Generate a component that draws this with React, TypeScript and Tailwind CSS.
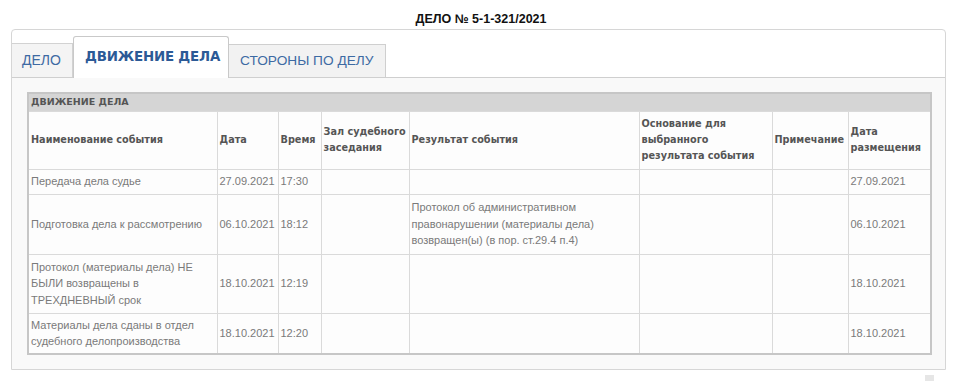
const cols = [189, 61, 43, 88, 230, 133, 76, 83]

const headers = [
  'Наименование события',
  'Дата',
  'Время',
  'Зал судебного заседания',
  'Результат события',
  'Основание для выбранного результата события',
  'Примечание',
  'Дата размещения',
]

const rows: { h: string; cells: string[] }[] = [
  { h: 'h-[25px]', cells: ['Передача дела судье', '27.09.2021', '17:30', '', '', '', '', '27.09.2021'] },
  {
    h: 'h-[60px]',
    cells: [
      'Подготовка дела к рассмотрению',
      '06.10.2021',
      '18:12',
      '',
      'Протокол об административном правонарушении (материалы дела) возвращен(ы) (в пор. ст.29.4 п.4)',
      '',
      '',
      '06.10.2021',
    ],
  },
  {
    h: 'h-[59px]',
    cells: ['Протокол (материалы дела) НЕ БЫЛИ возвращены в ТРЕХДНЕВНЫЙ срок', '18.10.2021', '12:19', '', '', '', '', '18.10.2021'],
  },
  {
    h: 'h-[41px]',
    cells: ['Материалы дела сданы в отдел судебного делопроизводства', '18.10.2021', '12:20', '', '', '', '', '18.10.2021'],
  },
]

export default function App() {
  return (
    <div className="w-[960px] h-[381px] bg-white font-['Liberation_Sans',Arial,sans-serif] overflow-hidden">
      <div className="pt-[12px] text-center text-[12.5px] leading-[14px] font-bold text-[#111] pl-[2px]">ДЕЛО № 5-1-321/2021</div>

      <div className="mt-[3px] ml-[11px] w-[935px] border border-[#d6d6d6] rounded-t-[4px] bg-white">
        {/* tabs */}
        <div className="pt-[6px] flex items-end border-b border-[#cfcfcf]">
          <div className="w-[61px] h-[34px] bg-[#f4f4f4] border-t border-r border-[#d2d2d2] flex items-center pl-[10px] text-[14px] text-[#3d6aa3]">
            ДЕЛО
          </div>
          <div className="w-[156px] h-[42px] -mb-px bg-white border border-b-0 border-[#c9c9c9] rounded-t-[3px] flex items-center pl-[11px] text-[13.4px] font-bold text-[#2c5a96] font-['DejaVu_Sans',sans-serif] tracking-[-0.2px]">
            ДВИЖЕНИЕ ДЕЛА
          </div>
          <div className="w-[157px] h-[33px] bg-[#f2f2f2] border-t border-r border-[#cfcfcf] flex items-center pl-[11px] text-[13.7px] text-[#3d6aa3]">
            СТОРОНЫ ПО ДЕЛУ
          </div>
        </div>

        {/* panel */}
        <div className="bg-[#f9f9f9] px-[15px] pt-[14px] pb-[14px]">
          <table className="table-fixed border-collapse w-[903px] border-2 border-[#c6c6c6] bg-[#fdfdfd]">
            <colgroup>
              {cols.map((w, i) => (
                <col key={i} style={{ width: w }} />
              ))}
            </colgroup>
            <tbody>
              <tr className="h-[18px] bg-[#d5d5d5]">
                <td colSpan={8} className="px-[2px] text-[9.5px] font-bold text-[#555] font-['DejaVu_Sans',sans-serif] leading-[12px]">
                  ДВИЖЕНИЕ ДЕЛА
                </td>
              </tr>
              <tr className="h-[58px]">
                {headers.map((t, i) => (
                  <td
                    key={i}
                    className="border border-[#dadada] px-[2px] align-middle text-[9.7px] leading-[16px] font-bold text-[#555] font-['DejaVu_Sans',sans-serif]"
                  >
                    {t}
                  </td>
                ))}
              </tr>
              {rows.map((r, ri) => (
                <tr key={ri} className={r.h}>
                  {r.cells.map((c, ci) => (
                    <td
                      key={ci}
                      className="border border-[#dadada] px-[2px] align-middle text-[11px] leading-[16.5px] text-[#7a7a7a]"
                    >
                      {c}
                    </td>
                  ))}
                </tr>
              ))}
            </tbody>
          </table>
        </div>
      </div>

      <div className="flex justify-end pr-[26px] pt-[5px]">
        <div className="w-[9px] h-[7px] bg-[#e6e6e6]" />
      </div>
    </div>
  )
}
